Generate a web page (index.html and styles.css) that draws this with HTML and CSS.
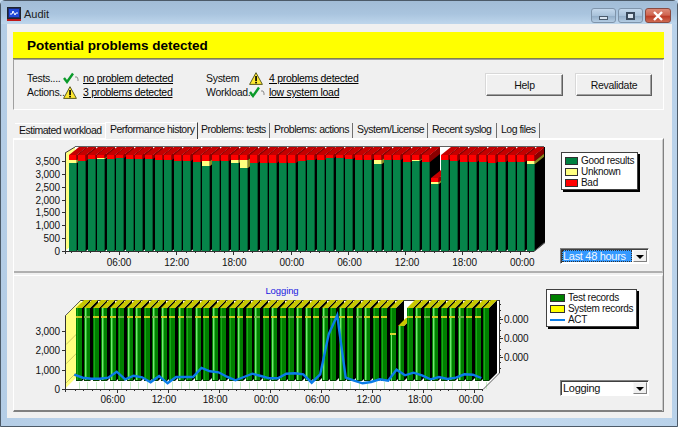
FILE: index.html
```html
<!DOCTYPE html>
<html lang="en">
<head>
<meta charset="utf-8">
<title>Audit</title>
<link rel="stylesheet" href="styles.css">
</head>
<body>
<div class="window">
  <header class="titlebar">
    <svg class="app-icon" width="14" height="14" viewBox="0 0 14 14">
      <rect x="0.5" y="0.5" width="13" height="11" fill="#1b2a6b" stroke="#20242c"/>
      <rect x="2" y="2" width="10" height="8" fill="#2148d8"/>
      <path d="M3 7h2l1-3 2 4 1-2h2" fill="none" stroke="#fff" stroke-width="1"/>
      <rect x="0" y="12" width="14" height="2" fill="#c01818"/>
    </svg>
    <span class="title-text">Audit</span>
    <div class="caption-buttons">
      <div class="cap cap-min"><span class="min-glyph"></span></div>
      <div class="cap cap-max"><span class="max-glyph"></span></div>
      <div class="cap cap-close">
        <svg width="12" height="10" viewBox="0 0 12 10"><path d="M2 1l8 8M10 1l-8 8" stroke="#fff" stroke-width="2.4" fill="none"/></svg>
      </div>
    </div>
  </header>
  <main class="content">
    <div class="banner">Potential problems detected</div>
    <section class="summary">
      <div class="status-grid">
        <span>Tests....</span>
        <svg class="icon" width="17" height="12" viewBox="0 0 17 12"><use href="#check"/></svg>
        <a class="link">no problem detected</a>
        <span>System</span>
        <svg class="icon" width="14" height="13" viewBox="0 0 14 13"><use href="#warn"/></svg>
        <a class="link">4 problems detected</a>
        <span>Actions..</span>
        <svg class="icon" width="14" height="13" viewBox="0 0 14 13"><use href="#warn"/></svg>
        <a class="link">3 problems detected</a>
        <span>Workload..</span>
        <svg class="icon" width="17" height="12" viewBox="0 0 17 12"><use href="#check"/></svg>
        <a class="link">low system load</a>
      </div>
      <div class="actions">
        <button class="btn btn-help">Help</button>
        <button class="btn btn-reval">Revalidate</button>
      </div>
    </section>
    <nav class="tabs">
      <span class="tab tab-w1">Estimated workload</span>
      <span class="tab tab-active">Performance history</span>
      <span class="tab tab-w3">Problems: tests</span>
      <span class="tab tab-w4">Problems: actions</span>
      <span class="tab tab-w5">System/License</span>
      <span class="tab tab-w6">Recent syslog</span>
      <span class="tab tab-w7">Log files</span>
    </nav>
    <section class="tabpanel">
      <div class="chart-row row-upper">
        <svg id="upper" class="chart" width="532" height="132" viewBox="14 139 532 132"></svg>
        <div class="side side-upper">
          <ul class="legend legend-upper">
            <li><i class="sw sw-good"></i>Good results</li>
            <li><i class="sw sw-unk"></i>Unknown</li>
            <li><i class="sw sw-bad"></i>Bad</li>
          </ul>
          <div class="combo combo-sel"><span class="combo-text">Last 48 hours</span><span class="combo-arrow"></span></div>
        </div>
      </div>
      <div class="chart-row row-lower">
        <svg id="lower" class="chart" width="532" height="136" viewBox="14 275 532 136"></svg>
        <div class="side side-lower">
          <ul class="legend legend-lower">
            <li><i class="sw sw-test"></i>Test records</li>
            <li><i class="sw sw-sys"></i>System records</li>
            <li><i class="sw-line"></i>ACT</li>
          </ul>
          <div class="combo"><span class="combo-text">Logging</span><span class="combo-arrow"></span></div>
        </div>
      </div>
    </section>
  </main>
</div>
<svg class="defs" width="0" height="0">
  <defs>
    <g id="check">
      <path d="M1 6l3 4L10 1.5" fill="none" stroke="#0a9a2a" stroke-width="2.4"/>
      <path d="M12 5h2l1 2v2" fill="none" stroke="#8a8a8a" stroke-width="1"/>
    </g>
    <g id="warn">
      <path d="M7 0.7L13.4 12.4H0.6z" fill="#ffe830" stroke="#5a5a20" stroke-width="1"/>
      <rect x="6.2" y="4" width="1.7" height="5" fill="#000"/>
      <rect x="6.2" y="9.8" width="1.7" height="1.6" fill="#000"/>
    </g>
  </defs>
</svg>
<script src="chart.js"></script>
</body>
</html>
```
FILE: styles.css
```css
* { box-sizing: border-box; }
html, body { margin: 0; padding: 0; }
body {
  width: 678px;
  height: 427px;
  overflow: hidden;
  font: 10.5px "Liberation Sans", Arial, sans-serif;
  letter-spacing: -0.3px;
  color: #101010;
  background: #c4dbf0;
}
.defs { display: block; height: 0; }
.window {
  width: 678px;
  height: 427px;
  display: flex;
  flex-direction: column;
  border: 1px solid #4c5a68;
  border-radius: 5px 5px 0 0;
  background: linear-gradient(90deg, #b4cde6, #c6dcf0 30%, #c6dcf0 70%, #b9d2ea);
}
.titlebar {
  height: 23px;
  flex: none;
  display: flex;
  align-items: center;
  padding-left: 6px;
  background: linear-gradient(180deg, #a2bcd6 0%, #a9c4de 55%, #bed6ec 100%);
}
.app-icon { flex: none; margin-top: 3px; }
.title-text { margin-left: 3px; font-size: 11px; letter-spacing: 0; color: #202020; margin-top: 3px; }
.caption-buttons { margin-left: auto; margin-right: 6px; display: flex; gap: 2px; margin-top: 6px; }
.cap {
  height: 15px;
  display: flex;
  align-items: center;
  justify-content: center;
  border: 1px solid #7f94aa;
  border-radius: 3px;
  background: linear-gradient(180deg, #c4d8ec 0%, #a9c2da 50%, #93aec8 55%, #b4cce2 100%);
}
.cap-min { width: 25px; }
.cap-max { width: 25px; }
.cap-close {
  width: 26px;
  border-color: #8a4a40;
  background: linear-gradient(180deg, #dc8a78 0%, #cf6450 48%, #bc3a26 55%, #cf6a52 100%);
}
.min-glyph { width: 9px; height: 4px; background: #d8e4f0; border: 1px solid #4a5a6c; margin-top: 4px; }
.max-glyph { width: 9px; height: 8px; background: #d8e4f0; border: 2px solid #3a4a5c; }
.content {
  flex: 1;
  margin: 0 5px 8px 6px;
  padding: 8px 8px 0 6px;
  background: #f0f0f0;
  min-height: 0;
}
.banner {
  height: 27px;
  background: #ffff00;
  border-bottom: 1px solid #808050;
  padding-left: 14px;
  font-size: 13.5px;
  letter-spacing: 0;
  font-weight: bold;
  line-height: 27px;
  color: #000;
}
.summary {
  height: 51px;
  display: flex;
  align-items: flex-start;
  border-left: 1px solid #a0a0a0;
  border-top: 1px solid #a0a0a0;
  border-right: 1px solid #fff;
  border-bottom: 1px solid #fff;
}
.status-grid {
  display: grid;
  grid-template-columns: 36px 20px 123px 43px 20px 100px;
  grid-auto-rows: 14px;
  margin: 11px 0 0 13px;
  line-height: 14px;
  align-items: center;
}
.status-grid .icon { display: block; }
.link { color: #000; text-decoration: underline; white-space: nowrap; }
.actions { margin: 14px 11px 0 auto; display: flex; gap: 13px; }
.btn {
  height: 22px;
  padding: 0;
  font: inherit;
  letter-spacing: inherit;
  color: #101010;
  background: #f0f0f0;
  border: 1px solid;
  border-color: #fff #606060 #606060 #fff;
  box-shadow: inset -1px -1px 0 #a0a0a0, -1px -1px 0 #d8d8d8;
}
.btn-help { width: 77px; }
.btn-reval { width: 76px; }
.tabs {
  display: flex;
  height: 17px;
  margin-top: 11px;
  padding-left: 2px;
  align-items: flex-end;
  letter-spacing: -0.5px;
}
.tab {
  height: 15px;
  line-height: 13px;
  padding-left: 4px;
  border-right: 1px solid #707070;
  white-space: nowrap;
}
.tab-w1 { width: 90px; border-right: 0; border-top: 1px solid #fff; }
.tab-active {
  width: 93px;
  height: 17px;
  line-height: 13px;
  padding-left: 4px;
  background: #f0f0f0;
  border-left: 1px solid #fff;
  border-top: 1px solid #fff;
  border-right: 1px solid #404040;
  position: relative;
  z-index: 1;
  margin-bottom: -1px;
}
.tab-w3 { width: 72px; padding-left: 3px; }
.tab-w4 { width: 83px; }
.tab-w5 { width: 75px; }
.tab-w6 { width: 69px; }
.tab-w7 { width: 43px; }
.tabpanel {
  height: 274px;
  border-top: 1px solid #fff;
  border-left: 1px solid #fff;
  border-right: 1px solid #808080;
  border-bottom: 2px solid #808080;
  display: flex;
  flex-direction: column;
  gap: 2px;
}
.chart-row {
  display: flex;
  align-items: stretch;
  border-right: 1px solid #c8c8c8;
}
.row-upper { height: 134px; border-top: 1px solid #fff; border-bottom: 2px solid #b0b0b0; }
.row-lower { height: 136px; border-top: 1px solid #fff; }
.chart { flex: none; display: block; }
.side {
  flex: 1;
  display: flex;
  flex-direction: column;
  align-items: flex-start;
  justify-content: space-between;
}
.side-upper { padding: 12px 0 7px 14px; }
.side-lower { padding: 13px 0 15px 0; }
.legend {
  list-style: none;
  margin: 0;
  padding: 2px 0 0 3px;
  background: #fff;
  border: 1px solid #404040;
  box-shadow: 2px 2px 0 #000;
  line-height: 11px;
  font-size: 10px;
}
.legend li { display: flex; align-items: center; height: 11px; white-space: nowrap; }
.legend-upper { width: 77px; height: 38px; margin-left: 1px; }
.legend-lower { width: 91px; height: 38px; }
.sw { height: 8px; margin-right: 3px; border: 1px solid #303030; flex: none; }
.legend-upper .sw { width: 13px; }
.legend-lower .sw { width: 15px; }
.sw-good { background: #008040; }
.sw-unk { background: #ffff80; }
.sw-bad { background: #ff0000; }
.sw-test { background: #008000; }
.sw-sys { background: #ffff00; }
.sw-line { width: 15px; height: 2px; margin-right: 3px; background: #0a7de8; flex: none; }
.combo {
  width: 89px;
  height: 16px;
  display: flex;
  align-items: stretch;
  background: #fff;
  border: 1px solid;
  border-color: #808080 #fff #fff #808080;
  box-shadow: inset 1px 1px 0 #404040;
  padding: 1px;
  font-size: 11px;
  letter-spacing: -0.3px;
}
.side-lower .combo { margin-left: 14px; }
.combo-text { flex: 1; padding-left: 1px; line-height: 13px; }
.combo-sel .combo-text { background: #3399ff; color: #f4f8ff; outline: 1px dotted #303030; outline-offset: -1px; }
.combo-arrow {
  width: 14px;
  flex: none;
  margin-left: 1px;
  background: #f0f0f0;
  position: relative;
  border: 1px solid;
  border-color: #f8f8f8 #808080 #808080 #f8f8f8;
}
.combo-arrow::after {
  content: "";
  position: absolute;
  left: 2px;
  top: 4px;
  border: 4px solid transparent;
  border-top: 4px solid #000;
  border-bottom: 0;
}
.chart text { font: 10px "Liberation Sans", Arial, sans-serif; letter-spacing: -0.1px; fill: #101010; }
.chart text.chart-title { font-size: 9.5px; fill: #2020e0; }
```
FILE: chart.js
```js
function p(pts, fill, extra) {
  return '<polygon points="' + pts.map(function (a) { return a.join(','); }).join(' ') + '" fill="' + fill + '"' + (extra || '') + '/>';
}
function r(x, y, w, h, fill) {
  return '<rect x="' + x + '" y="' + y + '" width="' + w + '" height="' + h + '" fill="' + fill + '"/>';
}
function l(x1, y1, x2, y2, c) {
  return '<line x1="' + x1 + '" y1="' + y1 + '" x2="' + x2 + '" y2="' + y2 + '" stroke="' + c + '" stroke-width="1"/>';
}
function t(x, y, s, anchor, cls) {
  return '<text x="' + x + '" y="' + y + '" text-anchor="' + (anchor || 'middle') + '"' + (cls ? ' class="' + cls + '"' : '') + '>' + s + '</text>';
}
var TIMES = ['06:00', '12:00', '18:00', '00:00', '06:00', '12:00', '18:00', '00:00'];

function upper() {
  var goodTop = [162.3,160,158.3,157.7,157.7,157.3,158.3,158.3,158.3,159.3,159,160.3,160,161,165.3,160,160,162.3,166.7,161.7,161.7,161.7,161.7,161.7,160.3,158.7,158.7,157.3,157.3,157.7,158.7,159,162.7,159.3,159,160.7,159.7,160.7,183,159,160,161,161,161,161.7,161,161,161,163.3];
  var unkTop = {0:159,3:157,14:160,17:159,18:159,32:159.3,36:158.7,38:181,48:159.5};
  var s = '';
  var X0 = 68.7, P = 9.54, W = 8, DX = 10, DY = 8, BASE = 250;
  s += p([[75,146],[544,146],[544,242],[75,242]], '#fff');
  s += p([[65,152],[75,146],[75,242],[65,250]], '#ffff80');
  s += p([[65,250],[75,242],[544,242],[534,250]], '#fff');
  s += l(65, 152, 75, 146, '#404040') + l(75, 145.5, 544, 145.5, '#606060');
  for (var i = 0; i < 49; i++) {
    var x = Math.round(X0 + i * P);
    var top = i === 38 ? 177 : 154;
    var g = Math.round(goodTop[i]);
    var u = unkTop[i] ? Math.round(unkTop[i]) : g;
    s += p([[x + W, top], [x + W + DX, top - DY], [x + W + DX, BASE - DY], [x + W, BASE]], '#000');
    s += p([[x + W, top], [x + W + DX, top - DY], [x + W + DX, u - DY], [x + W, u]], '#8a0000');
    if (u !== g) s += p([[x + W, u], [x + W + DX, u - DY], [x + W + DX, g - DY], [x + W, g]], '#8a8a20');
    s += p([[x, top], [x + DX, top - DY], [x + W + DX, top - DY], [x + W, top]], '#c40000');
    s += r(x, top, W, u - top, '#ff0000');
    if (u !== g) s += r(x, u, W, g - u, '#ffff80');
    s += r(x, g, W, BASE - g, '#06854a');
    s += r(x + W - 1, top, 1, BASE - top, 'rgba(0,0,0,0.35)');
  }
  s += l(544.5, 146, 544.5, 242, '#000');
  s += l(534, 250.5, 544.5, 241.5, '#606060');
  s += l(65.5, 152, 65.5, 253, '#303030') + l(65, 250.5, 534, 250.5, '#303030');
  for (var v = 0; v <= 7; v++) {
    var y = 250 - v * 12.86;
    s += l(62, Math.round(y) + 0.5, 66, Math.round(y) + 0.5, '#303030');
    var lab = v === 0 ? '0' : (v * 500 >= 1000 ? Math.floor(v * 500 / 1000) + ',' + ('00' + (v * 500 % 1000)).slice(-3) : String(v * 500));
    s += t(60, Math.round(y) + 4, lab, 'end');
  }
  for (var k = 0; k < 49; k++) {
    var tx = Math.round(X0 + 2.5 + k * P) + 0.5;
    s += l(tx, 250, tx, 250 + ((k % 6 === 5) ? 4 : 2), '#303030');
  }
  TIMES.forEach(function (n, j) { s += t(119 + j * 57.6, 265, n); });
  document.getElementById('upper').innerHTML = s;
}

function lower() {
  var act = [296,305,308,308,305,287,310,299,304,319,300,322,303,303,303,276,286,289,302,313,303,293,300,307,307,293,292,295,320,295,175,118,305,314,322,318,310,314,281,298,290,298,310,303,309,305,295,296,306];
  var bright = [1, 3, 4, 6, 7, 9, 10, 12, 14, 16, 19, 21, 23, 26, 27, 29, 31, 33, 34, 38, 40, 42, 44, 45];
  var s = '';
  var X0 = 76, P = 8.48, W = 6, D = 8, BOT = 380, TOP = 307;
  s += p([[81,299],[499,299],[499,372],[81,372]], '#fff');
  s += p([[65,315],[81,299],[81,372],[65,388]], '#ffff80');
  s += p([[65,388],[81,372],[499,372],[483,388]], '#fff');
  s += l(65, 315, 81, 299, '#606060') + l(81, 299.5, 499, 299.5, '#404040');
  for (var a = 0; a < 3; a++) {
    var wy = 368 - a * 19.2;
    s += l(66, wy + 14, 80, wy, '#c8c860');
  }
  for (var i = 0; i < 49; i++) {
    var x = Math.round(X0 + i * P);
    var top = i === 38 ? 325 : TOP;
    s += p([[x + W, top], [x + W + D, top - D], [x + W + D, BOT - D], [x + W, BOT]], '#000');
    s += p([[x, top], [x + D, top - D], [x + W + D, top - D], [x + W, top]], '#c8c800');
    s += r(x, top, W, BOT - top, '#008000');
    if (bright.indexOf(i) >= 0 && i !== 37) {
      s += r(x + 1, top, 1, BOT - top, '#70e870');
      s += r(x + 2, top, 1, BOT - top, '#30b830');
    } else {
      s += r(x + 1, top, 1, BOT - top, '#18a818');
    }
    s += r(x, BOT - 1, W, 1, '#004000');
    if (i === 37) {
      s += r(x + 1, 334, 1, BOT - 334, '#70e870');
      s += r(x, 332, W, 2, '#d8d830');
    } else if (i !== 38 && i !== 48) {
      s += r(x, 315, W, 2, i % 4 === 1 ? '#70b040' : '#c8c820');
    }
    s += l(x + 3.5, 381, x + 3.5, 388, '#c8f0c8');
  }
  s += l(499.5, 299, 499.5, 372, '#303030');
  s += l(483, 388.5, 499.5, 372, '#606060');
  s += l(65.5, 315, 65.5, 391, '#303030') + l(65, 388.5, 483, 388.5, '#303030');
  for (var v = 0; v <= 3; v++) {
    var y = Math.round(388 - v * 19.3);
    s += l(62, y + 0.5, 66, y + 0.5, '#303030');
    s += t(60, y + 4, v === 0 ? '0' : v + ',000', 'end');
  }
  for (var k = 0; k < 49; k++) {
    var tx = Math.round(X0 - 1 + k * P) + 0.5;
    s += l(tx, 388, tx, 388 + (k % 6 === 5 ? 4 : 2), '#303030');
  }
  TIMES.forEach(function (n, j) { s += t(112.7 + j * 51.2, 402, n); });
  for (var ry = 303; ry <= 370; ry += 6.4) {
    s += l(499, Math.round(ry) + 0.5, 501, Math.round(ry) + 0.5, '#303030');
  }
  [318, 337, 356].forEach(function (yy) {
    s += l(499, yy + 0.5, 503, yy + 0.5, '#303030');
    s += t(504, yy + 4, '0.000', 'start');
  });
  var pts = act.map(function (y, i) { return (74.3 + i * 8.48).toFixed(1) + ',' + (y / 3 + 275).toFixed(1); }).join(' ');
  s += '<polyline points="' + pts + '" fill="none" stroke="#0a7de8" stroke-width="2.4"/>';
  s += t(282, 293, 'Logging', 'middle', 'chart-title');
  document.getElementById('lower').innerHTML = s;
}
upper();
lower();
```
